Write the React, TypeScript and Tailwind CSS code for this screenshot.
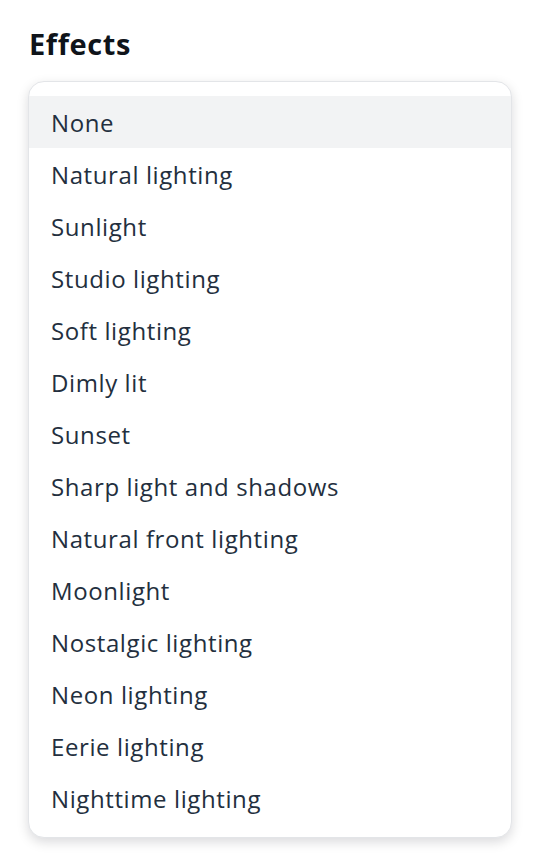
import React from "react";

const items = [
  "None",
  "Natural lighting",
  "Sunlight",
  "Studio lighting",
  "Soft lighting",
  "Dimly lit",
  "Sunset",
  "Sharp light and shadows",
  "Natural front lighting",
  "Moonlight",
  "Nostalgic lighting",
  "Neon lighting",
  "Eerie lighting",
  "Nighttime lighting",
];

export default function App() {
  return (
    <div
      className="w-[542px] h-[864px] bg-white pl-[28px] pr-[30px] pt-[24px]"
      style={{ fontFamily: '"Open Sans", "Noto Sans", sans-serif' }}
    >
      <h2 className="pl-[1px] text-[29px] leading-[40px] font-bold tracking-[0.6px] text-[#0f141a]">Effects</h2>
      <div className="mt-[17px] rounded-[16px] bg-white border border-[#e3e5e8] shadow-[0_4px_12px_rgba(0,7,22,0.15)] pt-[14px] pb-[13px]">
        {items.map((it, i) => (
          <div
            key={it}
            className={`h-[52px] flex items-center pl-[22px] pt-[2px] text-[24px] tracking-[0.6px] text-[#232f3e] ${
              i === 0 ? "bg-[#f2f3f4]" : ""
            }`}
          >
            {it}
          </div>
        ))}
      </div>
    </div>
  );
}
